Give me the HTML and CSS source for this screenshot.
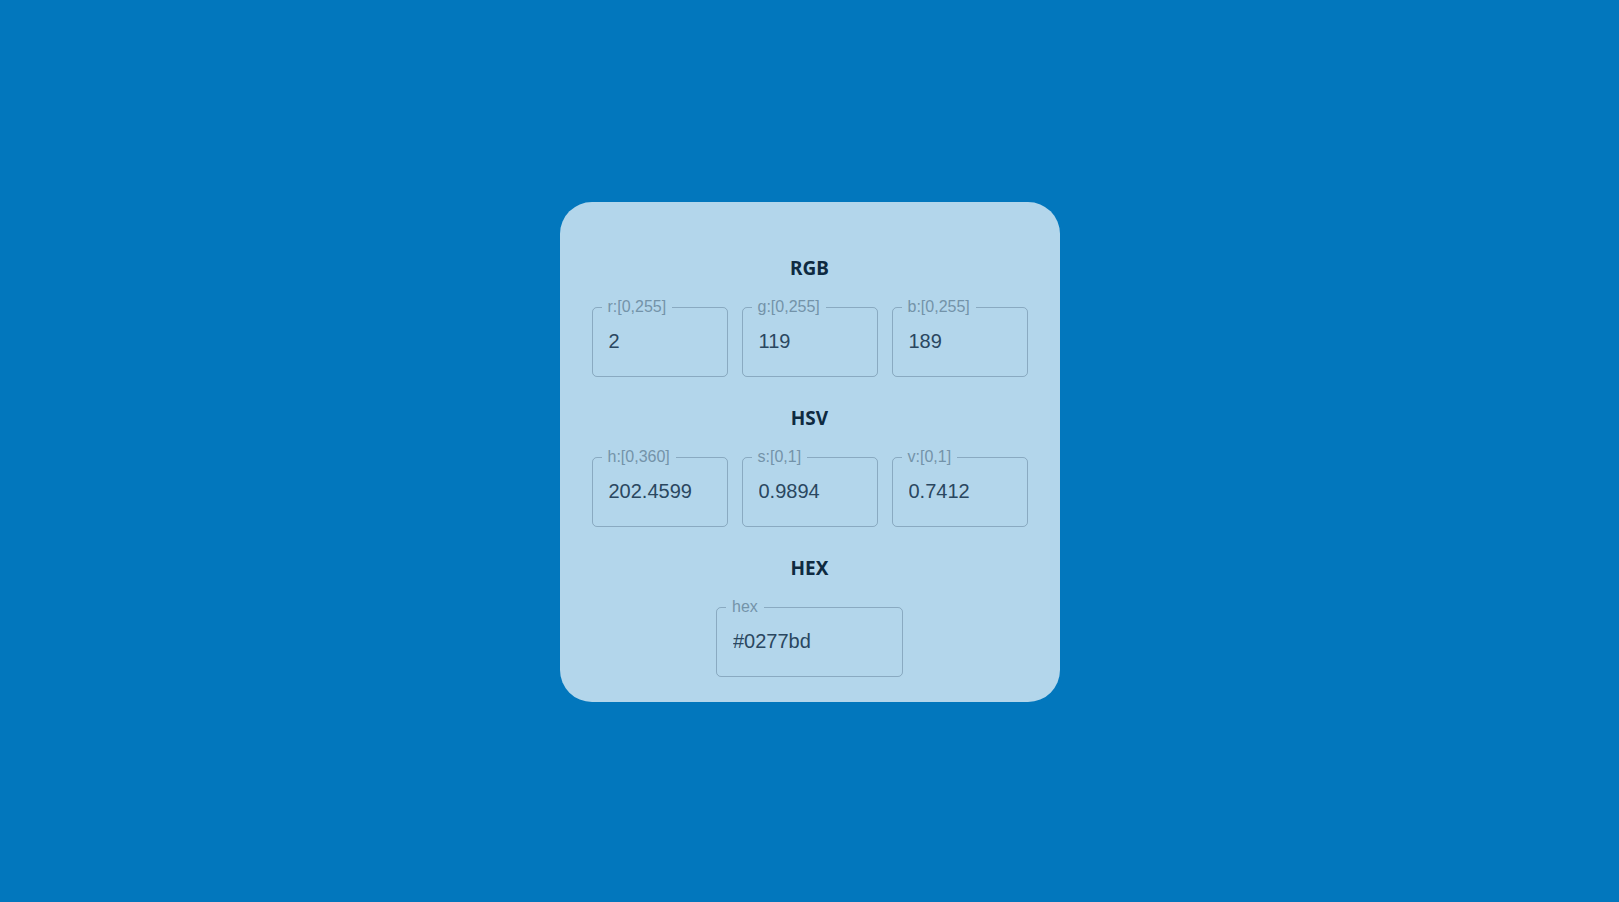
FILE: index.html
```html
<!DOCTYPE html>
<html>
<head>
    <title>Color Converter</title>
    <link rel="stylesheet" href="styles.css">
</head>
<body>
    <div class="card">
        <div class="section">
            <h2 class="section-title">RGB</h2>
            <div class="fields">
                <fieldset class="field">
                    <legend>r:[0,255]</legend>
                    <input type="text" value="2">
                </fieldset>
                <fieldset class="field">
                    <legend>g:[0,255]</legend>
                    <input type="text" value="119">
                </fieldset>
                <fieldset class="field">
                    <legend>b:[0,255]</legend>
                    <input type="text" value="189">
                </fieldset>
            </div>
        </div>
        <div class="section">
            <h2 class="section-title">HSV</h2>
            <div class="fields">
                <fieldset class="field">
                    <legend>h:[0,360]</legend>
                    <input type="text" value="202.4599">
                </fieldset>
                <fieldset class="field">
                    <legend>s:[0,1]</legend>
                    <input type="text" value="0.9894">
                </fieldset>
                <fieldset class="field">
                    <legend>v:[0,1]</legend>
                    <input type="text" value="0.7412">
                </fieldset>
            </div>
        </div>
        <div class="section">
            <h2 class="section-title">HEX</h2>
            <div class="fields single">
                <fieldset class="field">
                    <legend>hex</legend>
                    <input type="text" value="#0277bd">
                </fieldset>
            </div>
        </div>
    </div>
</body>
</html>
```

FILE: styles.css
```css
html, body {
    height: 100%;
}
body {
    margin: 0;
    background-color: #0277bd;
    font-family: 'Liberation Sans', Arial, sans-serif;
    display: flex;
    align-items: center;
    justify-content: center;
}
.card {
    box-sizing: border-box;
    width: 500px;
    height: 500px;
    margin-top: 2px;
    padding: 54px 0 25px;
    background: rgba(255, 255, 255, 0.7);
    border-radius: 32px;
    display: flex;
    flex-direction: column;
    gap: 29px;
}
.section-title {
    margin: 0 0 19px;
    font-family: 'Noto Sans', 'Open Sans', sans-serif;
    font-size: 19px;
    line-height: 24px;
    font-weight: 700;
    text-align: center;
    color: #0e2a40;
}
.fields {
    display: grid;
    grid-template-columns: repeat(3, 136px);
    gap: 14px;
    justify-content: center;
}
.fields.single {
    grid-template-columns: 187px;
}
.field {
    margin: 0;
    padding: 0 16px 8px;
    min-width: 0;
    border: 1px solid rgba(42, 71, 96, 0.3);
    border-radius: 5px;
}
.field legend {
    margin-left: -7px;
    padding: 0 6px;
    font-size: 16px;
    line-height: 16px;
    color: #7393a9;
}
.field input {
    display: block;
    box-sizing: border-box;
    width: 100%;
    height: 53px;
    padding: 0;
    border: none;
    outline: none;
    background: transparent;
    font-family: 'Liberation Sans', Arial, sans-serif;
    font-size: 20px;
    color: #2a4760;
}
```
